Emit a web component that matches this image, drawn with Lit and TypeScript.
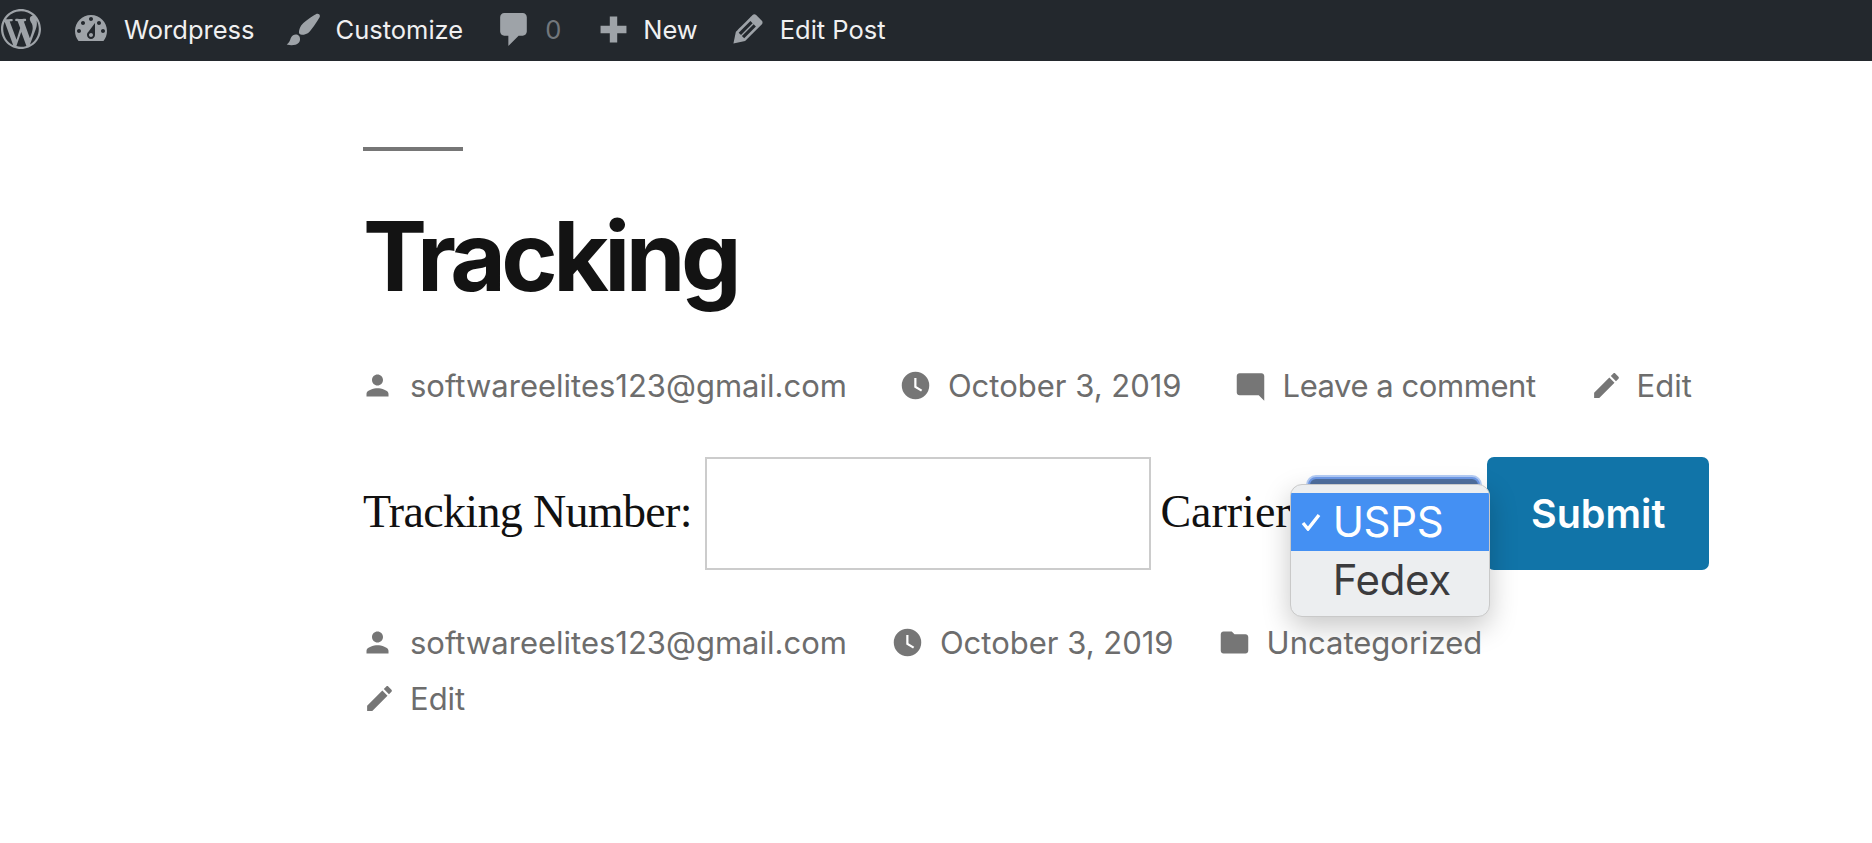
import { LitElement, html, css, svg } from "lit";
import { customElement } from "lit/decorators.js";

const adminIcons: Record<string, any> = {
  dash: svg`<path fill-rule="evenodd" d="M3.76 16h12.48c1.1-1.37 1.76-3.11 1.76-5 0-4.42-3.58-8-8-8s-8 3.58-8 8c0 1.89.66 3.63 1.76 5zM10 4c.55 0 1 .45 1 1s-.45 1-1 1-1-.45-1-1 .45-1 1-1zM6 6c.55 0 1 .45 1 1s-.45 1-1 1-1-.45-1-1 .45-1 1-1zm8 0c.55 0 1 .45 1 1s-.45 1-1 1-1-.45-1-1 .45-1 1-1zm-5.37 5.55L12 7v6c0 1.1-.9 2-2 2s-2-.9-2-2c0-.57.24-1.08.63-1.45zM4 10c.55 0 1 .45 1 1s-.45 1-1 1-1-.45-1-1 .45-1 1-1zm12 0c.55 0 1 .45 1 1s-.45 1-1 1-1-.45-1-1 .45-1 1-1zm-5 3c0-.55-.45-1-1-1s-1 .45-1 1 .45 1 1 1 1-.45 1-1z"/>`,
  brush: svg`<path d="M18.33 3.57s.27-.8-.31-1.36c-.53-.52-1.22-.24-1.22-.24-.61.3-5.76 3.47-7.67 5.57-.86.96-2.06 3.79-1.09 4.82.92.98 3.96-.17 4.79-1 2.06-2.06 5.21-7.17 5.5-7.79zM1.4 17.65c2.37-1.56 1.46-3.41 3.23-4.64.93-.65 2.22-.62 3.08.29.63.67.8 2.57-.16 3.46-1.57 1.45-4 1.55-6.15.89z"/>`,
  comment: svg`<path d="M5 2h9c1.1 0 2 .9 2 2v7c0 1.1-.9 2-2 2h-2l-5 5v-5H5c-1.1 0-2-.9-2-2V4c0-1.1.9-2 2-2z"/>`,
  plus: svg`<path d="M17 8v4h-5v5H8v-5H3V8h5V3h4v5z"/>`,
  edit: svg`<path fill-rule="evenodd" d="M13.89 3.39l2.71 2.72c.46.46.42 1.24.03 1.64l-8.01 8.02-5.56 1.16 1.16-5.58s7.6-7.63 7.99-8.03c.39-.39 1.22-.39 1.68.07zm-2.73 2.79l-5.59 5.61 1.11 1.11 5.54-5.65zm-2.97 8.23l5.58-5.6-1.07-1.08-5.59 5.6z"/>`,
};

const metaIcons: Record<string, any> = {
  user: svg`<path d="M12 12c2.21 0 4-1.79 4-4s-1.79-4-4-4-4 1.79-4 4 1.79 4 4 4zm0 2c-2.67 0-8 1.34-8 4v2h16v-2c0-2.66-5.33-4-8-4z"/>`,
  clock: svg`<path fill-rule="evenodd" d="M12 2a10 10 0 1 0 0 20 10 10 0 0 0 0-20zm-.9 4.5h1.6v6l4.2 2.6-.85 1.35-4.95-3.05z"/>`,
  comment: svg`<path d="M20 3H4c-1.1 0-2 .9-2 2v12c0 1.1.9 2 2 2h14l4 4V5c0-1.1-.9-2-2-2z"/>`,
  folder: svg`<path d="M10 4H4c-1.1 0-2 .9-2 2v12c0 1.1.9 2 2 2h16c1.1 0 2-.9 2-2V8c0-1.1-.9-2-2-2h-8l-2-2z"/>`,
  edit: svg`<path d="M3 17.25V21h3.75L17.81 9.94l-3.75-3.75L3 17.25zM20.71 7.04c.39-.39.39-1.02 0-1.41l-2.34-2.34c-.39-.39-1.02-.39-1.41 0l-1.83 1.83 3.75 3.75 1.83-1.83z"/>`,
};

@customElement("app-root")
export class AppRoot extends LitElement {
  static styles = css`
    :host { display: block; min-height: 843px; background: #fff; font-family: Inter, "Noto Sans", sans-serif; overflow: hidden; }
    .bar { height: 61px; box-sizing: border-box; padding-bottom: 3px; background: #23282d; display: flex; align-items: center; color: #f0f0f1; font-size: 25.5px; }
    .bar svg { fill: #9ea3a8; display: block; flex: none; }
    .logo { margin-left: 1px; width: 40px; height: 40px; }
    .num { color: #72777c; }
    .dash { width: 40px; height: 40px; margin-left: 30px; margin-right: 13px; }
    .brush { width: 39px; height: 39px; margin-left: 29px; margin-right: 13px; }
    .cmt { width: 41px; height: 41px; margin-left: 31px; margin-right: 10px; }
    .plus { width: 37px; height: 37px; margin-left: 33.5px; margin-right: 11.5px; }
    .pen { width: 42px; height: 42px; margin-left: 29.6px; margin-right: 10.4px; }

    main { padding-left: 363px; }
    .rule { width: 100px; height: 4px; background: #767676; margin-top: 86px; }
    h1 { margin: 45px 0 0; font-size: 96px; line-height: 1.25; font-weight: 700; letter-spacing: -4.6px; color: #131313; }

    .meta { display: flex; align-items: center; color: #6d6d6d; font-size: 31px; line-height: 47px; padding-left: 2px; }
    .meta svg { fill: #767676; width: 33px; height: 33px; display: block; flex: none; margin-left: -4px; }
    .meta svg.pencil { margin-left: -2px; }
    .mi { display: flex; align-items: center; }
    .cell { width: 45px; flex: none; }
    .tight { letter-spacing: -0.45px; }
    .top { margin-top: 46px; gap: 56px; }
    .low { margin-top: 49px; gap: 48px; }
    .edit2 { margin-top: 9px; }

    form { display: flex; align-items: center; margin-top: 48px; height: 113px; font-family: "Liberation Serif", serif; font-size: 46px; color: #111; }
    .txt { padding-bottom: 5px; }
    .lbl { letter-spacing: -0.66px; }
    .input { width: 446px; height: 113px; box-sizing: border-box; border: 2px solid #ccc; background: #fff; margin: 0 9.5px 0 13px; }
    .sel { position: relative; width: 174px; height: 46px; flex: none; margin: 19px 6.5px 0 16px; box-sizing: border-box; border-radius: 9px; background: #4f6f9f; border: 3px solid #6f9ae8; outline: 2px solid #b4cdf6; outline-offset: -1px; align-self: flex-start; }
    .pop { position: absolute; left: -20px; top: 5px; width: 200px; height: 133px; box-sizing: border-box; border: 1px solid #c9c9c9; border-radius: 12px; background: #eceef0; padding-top: 8px; box-shadow: 0 10px 28px rgba(0,0,0,.22); font-family: Inter, sans-serif; font-size: 42px; letter-spacing: -0.3px; z-index: 2; overflow: hidden; }
    .opt { height: 58px; display: flex; align-items: center; padding-left: 42px; color: #3b3b3d; line-height: 1; position: relative; }
    .opt.on { background: #4490f3; color: #fff; }
    .opt svg { position: absolute; left: 10px; top: 20px; width: 20px; height: 18px; fill: none; stroke: #fff; stroke-width: 3.4; }
    .submit { width: 222px; height: 113px; border: 0; border-radius: 7px; background: #1174a8; color: #fff; font-family: Inter, sans-serif; font-weight: 600; font-size: 39.5px; padding: 0; flex: none; }
  `;

  private adm(name: string, cls: string) {
    return html`<svg class=${cls} viewBox="0 0 20 20">${adminIcons[name]}</svg>`;
  }

  private meta(icon: string, text: string, cls = "") {
    return html`<span class="mi"><span class="cell"><svg class=${icon === "edit" ? "pencil" : ""} viewBox="0 0 24 24">${metaIcons[icon]}</svg></span><span class=${cls}>${text}</span></span>`;
  }

  render() {
    return html`
      <div class="bar">
        <svg class="logo" viewBox="0 0 20 20"><path d="M20 10c0-5.51-4.49-10-10-10C4.48 0 0 4.49 0 10c0 5.52 4.48 10 10 10 5.51 0 10-4.48 10-10zM7.78 15.37L4.37 6.22c.55-.02 1.17-.08 1.17-.08.5-.06.44-1.13-.06-1.11 0 0-1.45.11-2.37.11-.18 0-.37 0-.58-.01C4.12 2.69 6.87 1.11 10 1.11c2.33 0 4.45.87 6.05 2.34-.68-.11-1.65.39-1.65 1.58 0 .74.45 1.36.9 2.1.35.61.55 1.36.55 2.46 0 1.49-1.4 5-1.4 5l-3.03-8.37c.54-.02.82-.17.82-.17.5-.05.44-1.25-.06-1.22 0 0-1.44.12-2.38.12-.87 0-2.33-.12-2.33-.12-.5-.03-.56 1.2-.06 1.22l.92.08 1.26 3.41zM17.41 10c.24-.64.74-1.87.43-4.25.7 1.29 1.05 2.71 1.05 4.25 0 3.29-1.73 6.24-4.4 7.78.97-2.59 1.94-5.2 2.92-7.78zM6.1 18.09C3.12 16.65 1.11 13.53 1.11 10c0-1.3.23-2.48.72-3.59C3.25 10.3 4.67 14.2 6.1 18.09zm4.03-6.63l2.58 6.98c-.86.29-1.76.45-2.71.45-.79 0-1.57-.11-2.29-.33.81-2.38 1.62-4.74 2.42-7.1z"/></svg>
        ${this.adm("dash", "dash")}<span>Wordpress</span>
        ${this.adm("brush", "brush")}<span>Customize</span>
        ${this.adm("comment", "cmt")}<span class="num">0</span>
        ${this.adm("plus", "plus")}<span>New</span>
        ${this.adm("edit", "pen")}<span>Edit Post</span>
      </div>
      <main>
        <div class="rule"></div>
        <h1>Tracking</h1>
        <div class="meta top">
          ${this.meta("user", "softwareelites123@gmail.com")}
          ${this.meta("clock", "October 3, 2019")}
          ${this.meta("comment", "Leave a comment", "tight")}
          ${this.meta("edit", "Edit")}
        </div>
        <form @submit=${(e: Event) => e.preventDefault()}>
          <span class="txt lbl">Tracking Number:</span>
          <div class="input"></div>
          <span class="txt">Carrier</span>
          <div class="sel">
            <div class="pop">
              <div class="opt on"><svg viewBox="0 0 20 18"><path d="M2 10l5 6L18 2"/></svg>USPS</div>
              <div class="opt">Fedex</div>
            </div>
          </div>
          <button class="submit">Submit</button>
        </form>
        <div class="meta low">
          ${this.meta("user", "softwareelites123@gmail.com")}
          ${this.meta("clock", "October 3, 2019")}
          ${this.meta("folder", "Uncategorized")}
        </div>
        <div class="meta edit2">${this.meta("edit", "Edit")}</div>
      </main>
    `;
  }
}
